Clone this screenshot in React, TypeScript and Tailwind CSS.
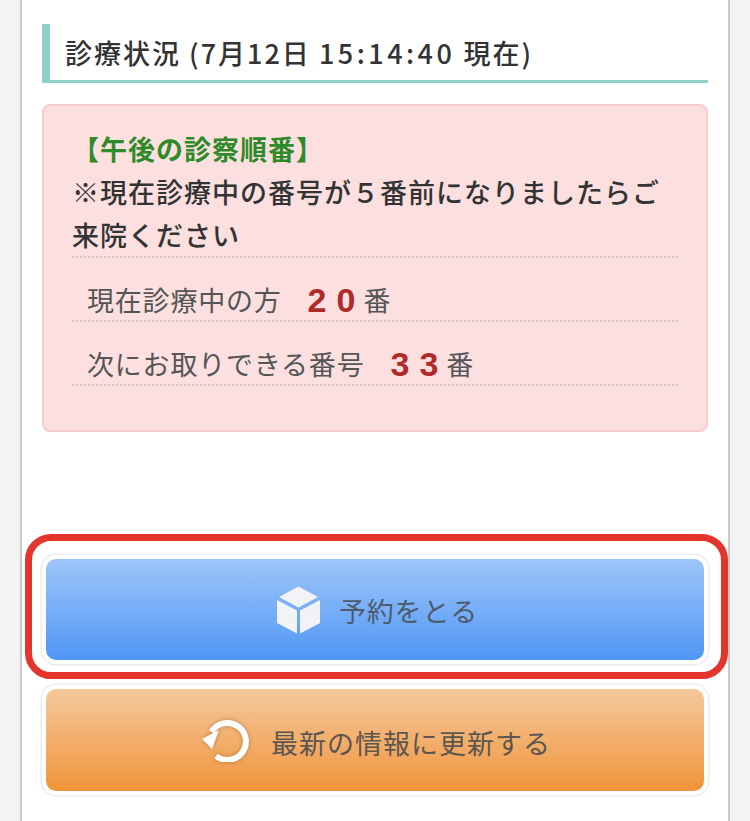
const font = { fontFamily: '"Noto Sans CJK JP", "Noto Sans", sans-serif' };

function CubeIcon() {
  return (
    <svg viewBox="0 0 43 48" className="h-[48px] w-[43px]" aria-hidden="true">
      <path d="M21.5 0.5 L41 11 L21.5 21.5 L2 11 Z" fill="#f1f3f7" />
      <path d="M0 14 L20 24.5 L20 47.5 L0 37 Z" fill="#f1f3f7" />
      <path d="M43 14 L23 24.5 L23 47.5 L43 37 Z" fill="#f1f3f7" />
    </svg>
  );
}

function RefreshIcon() {
  return (
    <svg viewBox="0 0 48 43" className="h-[43px] w-[48px] drop-shadow-[0_0_2px_rgba(120,70,20,0.45)]" aria-hidden="true">
      <path d="M9.5 13 A18.5 18.5 0 1 1 14 37" fill="none" stroke="#ffffff" strokeWidth="6" />
      <path d="M0 20 L17 11 L10 30 Z" fill="#ffffff" />
    </svg>
  );
}

export default function App() {
  return (
    <div className="min-h-[821px] bg-[#f3f3f3] px-[20px]" style={font}>
      <div className="min-h-[821px] w-[710px] border-x-2 border-[#c9c9c9] bg-white px-[20px] pt-[24px]">
        <h2 className="flex h-[59px] items-center border-b-[3px] border-l-8 border-[#8fd0cc] pl-[15px] pt-[3px] text-[27px] font-medium tracking-[2px] whitespace-pre text-[#333]">
          診療状況 (7月12日 <span className="tracking-[3.5px]">15:14:40</span> 現在)
        </h2>

        <div className="mt-[21px] h-[328px] rounded-lg border-2 border-[#f6cccc] bg-[#fce0e0] px-[28px] pt-[21px] text-[#3a3a3a]">
          <p className="text-[27px] leading-[43px] font-bold tracking-[1px] text-[#2f8a2a]">【午後の診察順番】</p>
          <p className="border-b-2 border-dotted border-[#d4c4c4] text-[27px] leading-[43px] font-medium tracking-[1px] text-[#333]">
            ※現在診療中の番号が５番前になりましたらご来院ください
          </p>
          <div className="flex h-[64px] items-end border-b-2 border-dotted border-[#d4c4c4] pl-[15px] text-[27px] leading-[40px] tracking-[0.8px] text-[#555]">
            <span>現在診療中の方</span>
            <span className="ml-[26px] font-['Liberation_Sans'] text-[34px] font-bold tracking-[10px] text-[#b02a2a]">20</span>
            <span className="-ml-[2px]">番</span>
          </div>
          <div className="flex h-[64px] items-end border-b-2 border-dotted border-[#d4c4c4] pl-[15px] text-[27px] leading-[40px] tracking-[0.8px] text-[#555]">
            <span>次にお取りできる番号</span>
            <span className="ml-[26px] font-['Liberation_Sans'] text-[34px] font-bold tracking-[10px] text-[#b02a2a]">33</span>
            <span className="-ml-[2px]">番</span>
          </div>
        </div>

        <div className="relative mt-[123px]">
          <button className="flex h-[109px] w-full items-center justify-center gap-[19px] rounded-[14px] border-4 border-white bg-gradient-to-b from-[#9dc5f8] to-[#4f96f5] pl-[5px] text-[27px] tracking-[0.8px] text-[#4d5b6d] shadow-[0_0_0_1.5px_#ececf0]">
            <CubeIcon />
            <span className="mt-[4px]">予約をとる</span>
          </button>
          <div className="pointer-events-none absolute -top-[21px] -right-[20px] -bottom-[15px] -left-[17px] rounded-[26px] border-[7px] border-[#e3352b]" />
        </div>

        <button className="mt-[21px] flex h-[110px] w-full items-center justify-center gap-[21px] rounded-[14px] border-4 border-white bg-gradient-to-b from-[#f3c899] to-[#f09435] pl-[3px] text-[27px] tracking-[1px] text-[#5c5650] shadow-[0_0_0_1.5px_#ececf0]">
          <RefreshIcon />
          <span className="mt-[6px]">最新の情報に更新する</span>
        </button>
      </div>
    </div>
  );
}
